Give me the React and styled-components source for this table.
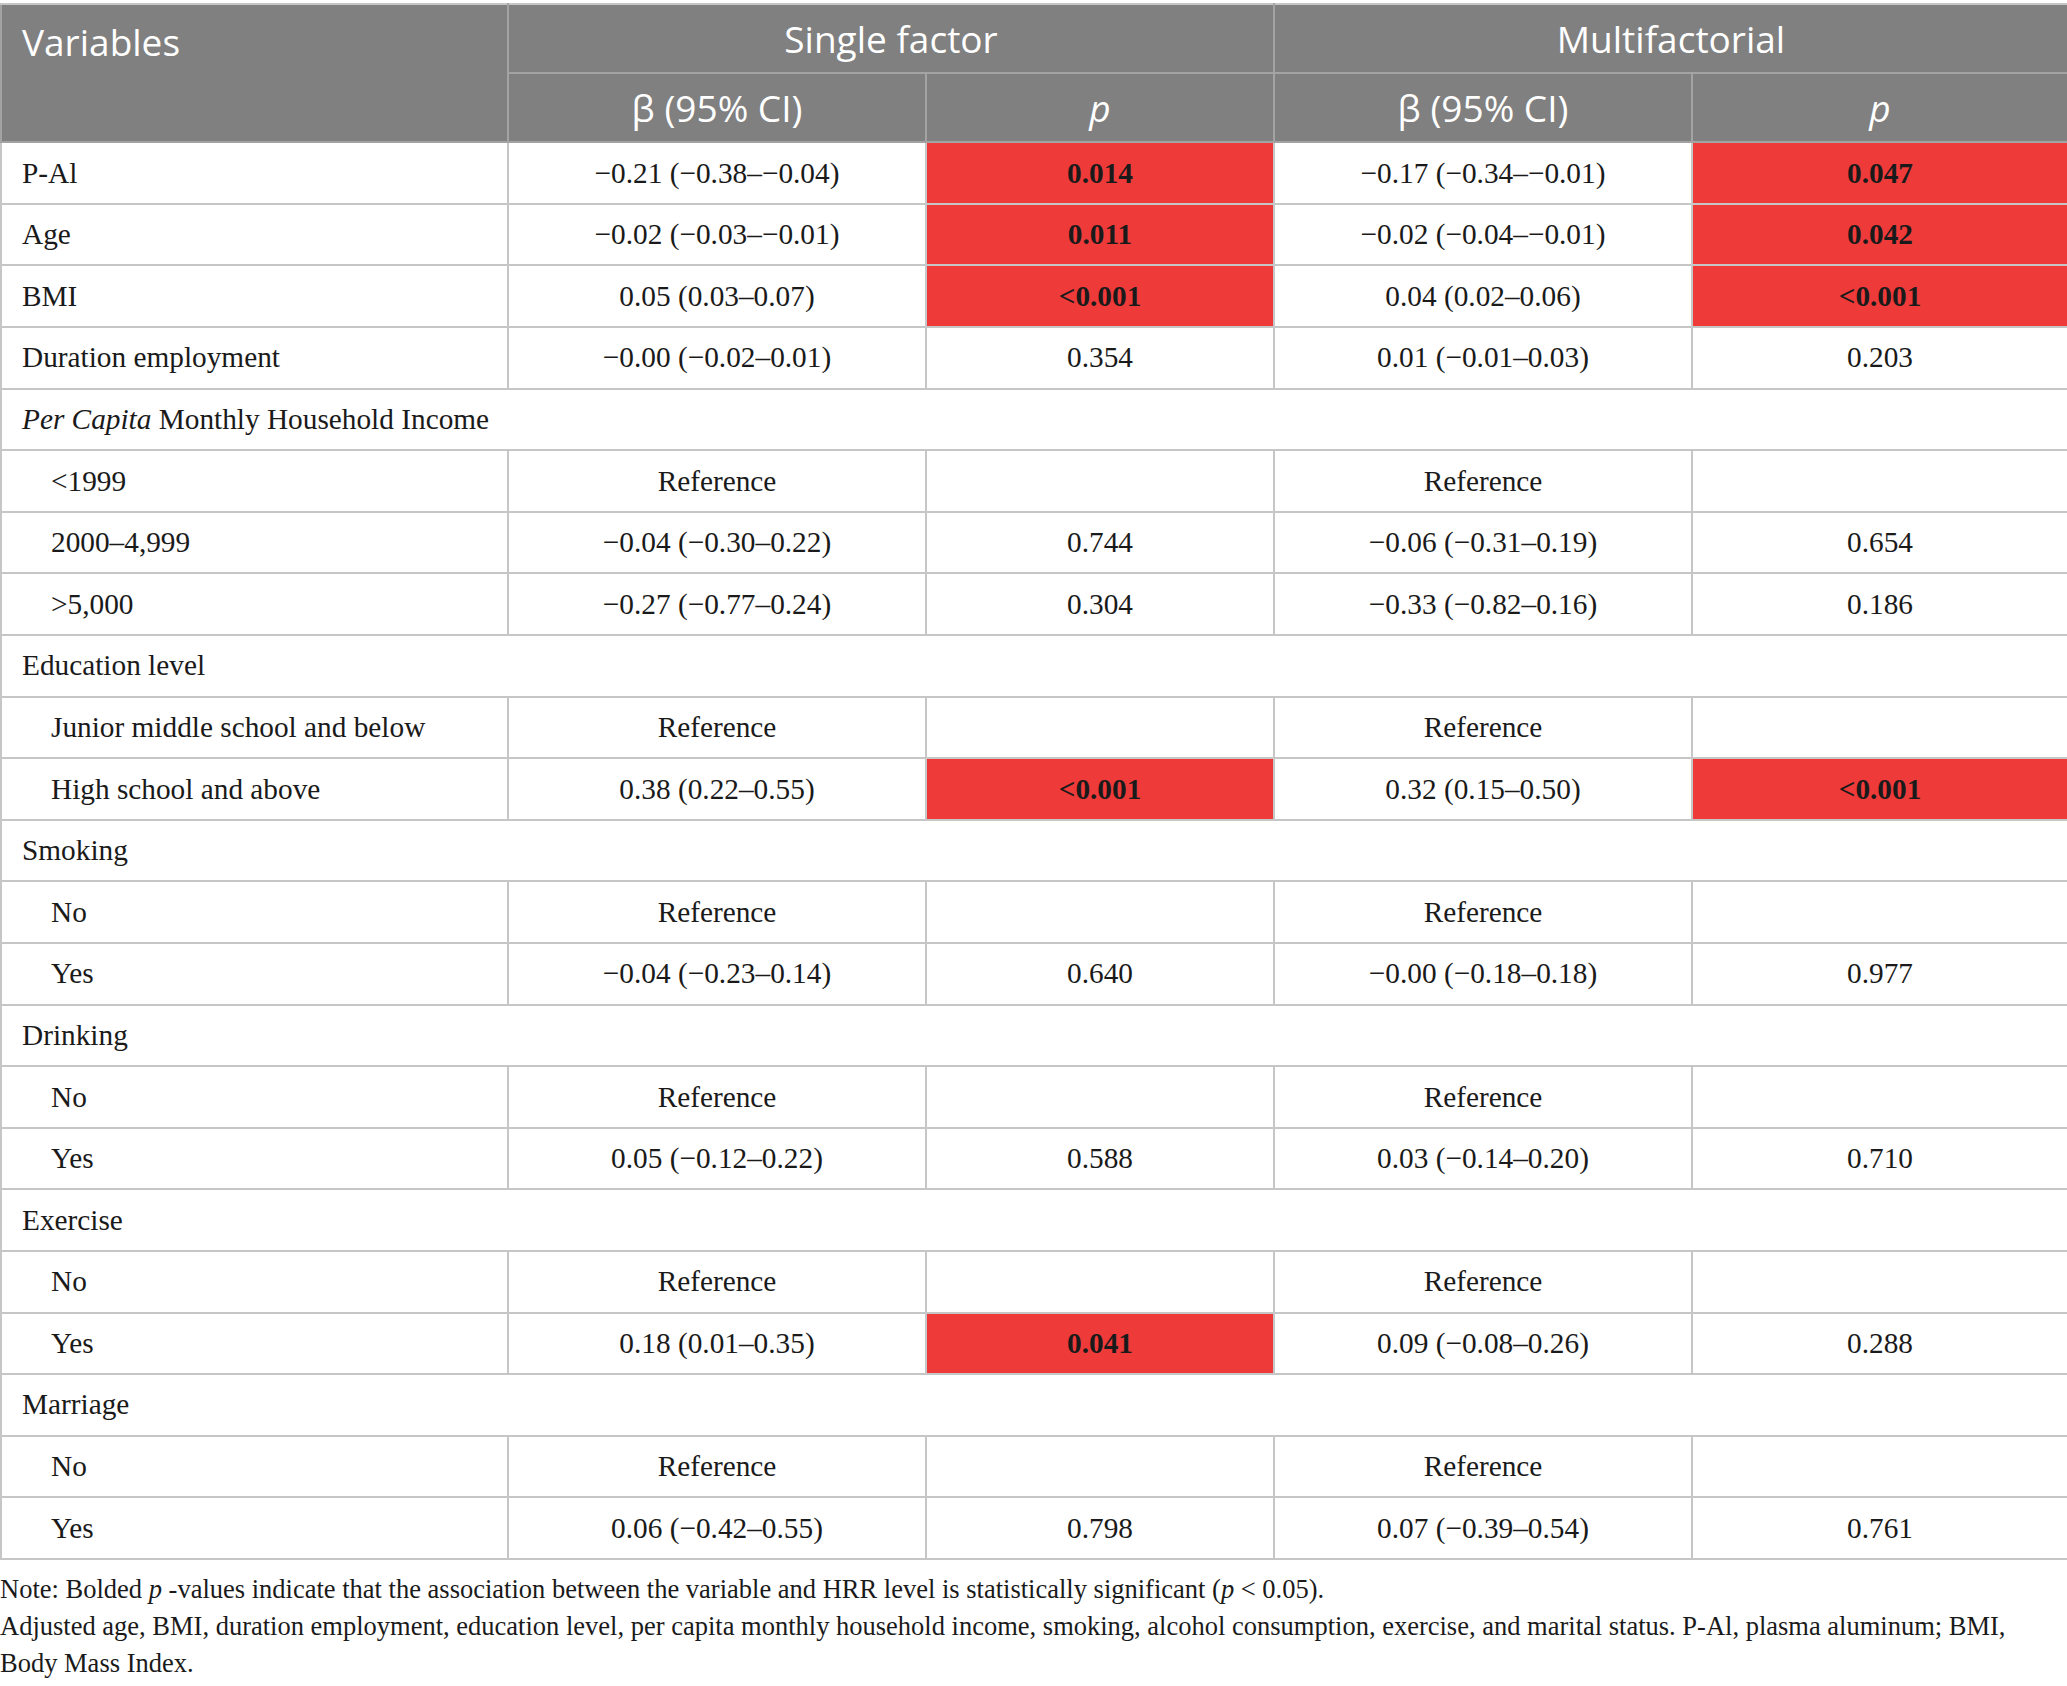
import React from 'react'
import styled, { createGlobalStyle } from 'styled-components'

const GlobalStyle = createGlobalStyle`
  body {
    margin: 0;
    padding-top: 3px;
    background: #fff;
    font-family: 'Liberation Serif', 'Times New Roman', serif;
  }
`

const Table = styled.table`
  width: 2067px;
  table-layout: fixed;
  border-collapse: collapse;
  border: 2px solid #c6c6c6;
  color: #1a1a1a;
`

const HeadCell = styled.th`
  height: ${p => p.h || 67}px;
  padding: 0 0 0 ${p => (p.left ? 20 : 0)}px;
  background: #808080;
  color: #fff;
  font-family: 'Open Sans', 'Noto Sans', sans-serif;
  font-size: 37px;
  font-weight: 400;
  text-align: ${p => (p.left ? 'left' : 'center')};
  vertical-align: ${p => (p.top ? 'top' : 'middle')};
  padding-top: ${p => (p.top ? 11 : 0)}px;
  border: 2px solid #a3a3a3;
  border-top-color: #c6c6c6;
  font-style: ${p => (p.italic ? 'italic' : 'normal')};
`

const Cell = styled.td`
  height: 59.6px;
  padding: 0;
  padding-left: ${p => (p.indent ? 49 : p.label ? 20 : 0)}px;
  text-align: ${p => (p.label ? 'left' : 'center')};
  vertical-align: middle;
  font-size: 29.3px;
  font-weight: ${p => (p.sig ? 700 : 400)};
  background: ${p => (p.sig ? '#ef3a3a' : '#fff')};
  border: 2px solid #c6c6c6;
  white-space: nowrap;
`

const Notes = styled.div`
  margin-top: 11px;
  font-size: 26.5px;
  line-height: 37px;
  color: #1a1a1a;
  width: 2030px;
`

const rows = [
  { label: 'P-Al', s: ['−0.21 (−0.38–−0.04)', '0.014', 1], m: ['−0.17 (−0.34–−0.01)', '0.047', 1] },
  { label: 'Age', s: ['−0.02 (−0.03–−0.01)', '0.011', 1], m: ['−0.02 (−0.04–−0.01)', '0.042', 1] },
  { label: 'BMI', s: ['0.05 (0.03–0.07)', '<0.001', 1], m: ['0.04 (0.02–0.06)', '<0.001', 1] },
  { label: 'Duration employment', s: ['−0.00 (−0.02–0.01)', '0.354'], m: ['0.01 (−0.01–0.03)', '0.203'] },
  { group: <><i>Per Capita</i> Monthly Household Income</> },
  { label: '<1999', indent: 1, s: ['Reference', ''], m: ['Reference', ''] },
  { label: '2000–4,999', indent: 1, s: ['−0.04 (−0.30–0.22)', '0.744'], m: ['−0.06 (−0.31–0.19)', '0.654'] },
  { label: '>5,000', indent: 1, s: ['−0.27 (−0.77–0.24)', '0.304'], m: ['−0.33 (−0.82–0.16)', '0.186'] },
  { group: 'Education level' },
  { label: 'Junior middle school and below', indent: 1, s: ['Reference', ''], m: ['Reference', ''] },
  { label: 'High school and above', indent: 1, s: ['0.38 (0.22–0.55)', '<0.001', 1], m: ['0.32 (0.15–0.50)', '<0.001', 1] },
  { group: 'Smoking' },
  { label: 'No', indent: 1, s: ['Reference', ''], m: ['Reference', ''] },
  { label: 'Yes', indent: 1, s: ['−0.04 (−0.23–0.14)', '0.640'], m: ['−0.00 (−0.18–0.18)', '0.977'] },
  { group: 'Drinking' },
  { label: 'No', indent: 1, s: ['Reference', ''], m: ['Reference', ''] },
  { label: 'Yes', indent: 1, s: ['0.05 (−0.12–0.22)', '0.588'], m: ['0.03 (−0.14–0.20)', '0.710'] },
  { group: 'Exercise' },
  { label: 'No', indent: 1, s: ['Reference', ''], m: ['Reference', ''] },
  { label: 'Yes', indent: 1, s: ['0.18 (0.01–0.35)', '0.041', 1], m: ['0.09 (−0.08–0.26)', '0.288'] },
  { group: 'Marriage' },
  { label: 'No', indent: 1, s: ['Reference', ''], m: ['Reference', ''] },
  { label: 'Yes', indent: 1, s: ['0.06 (−0.42–0.55)', '0.798'], m: ['0.07 (−0.39–0.54)', '0.761'] },
]

export default function App() {
  return (
    <>
      <GlobalStyle />
      <Table>
        <colgroup>
          <col style={{ width: 507 }} />
          <col style={{ width: 418 }} />
          <col style={{ width: 348 }} />
          <col style={{ width: 418 }} />
          <col style={{ width: 376 }} />
        </colgroup>
        <thead>
          <tr>
            <HeadCell left top rowSpan={2}>Variables</HeadCell>
            <HeadCell colSpan={2} h={67.3}>Single factor</HeadCell>
            <HeadCell colSpan={2} h={67.3}>Multifactorial</HeadCell>
          </tr>
          <tr>
            <HeadCell h={67}>β (95% CI)</HeadCell>
            <HeadCell h={67} italic>p</HeadCell>
            <HeadCell h={67}>β (95% CI)</HeadCell>
            <HeadCell h={67} italic>p</HeadCell>
          </tr>
        </thead>
        <tbody>
          {rows.map((r, i) =>
            r.group ? (
              <tr key={i}>
                <Cell label colSpan={5}>{r.group}</Cell>
              </tr>
            ) : (
              <tr key={i}>
                <Cell label indent={r.indent}>{r.label}</Cell>
                <Cell>{r.s[0]}</Cell>
                <Cell sig={r.s[2]}>{r.s[1]}</Cell>
                <Cell>{r.m[0]}</Cell>
                <Cell sig={r.m[2]}>{r.m[1]}</Cell>
              </tr>
            )
          )}
        </tbody>
      </Table>
      <Notes>
        Note: Bolded <i>p</i> -values indicate that the association between the variable and HRR level is statistically significant (<i>p</i> &lt; 0.05).
        <br />
        Adjusted age, BMI, duration employment, education level, per capita monthly household income, smoking, alcohol consumption, exercise, and marital status. P-Al, plasma aluminum; BMI, Body Mass Index.
      </Notes>
    </>
  )
}
